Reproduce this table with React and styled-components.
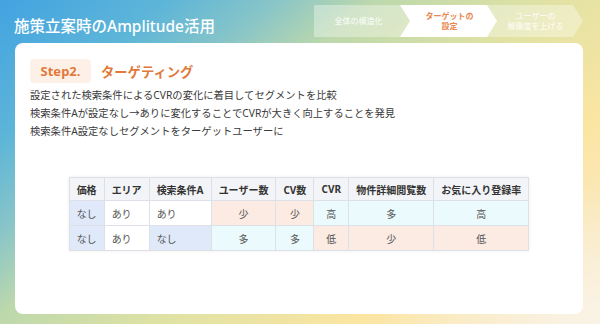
import styled, { createGlobalStyle } from "styled-components"

const GlobalStyle = createGlobalStyle`
  html, body {
    margin: 0;
    padding: 0;
  }
  body {
    font-family: "Noto Sans", "Noto Sans CJK JP", sans-serif;
  }
  * {
    box-sizing: border-box;
  }
`

const Page = styled.div`
  width: 600px;
  height: 324px;
  display: flex;
  flex-direction: column;
  padding: 0 17px 10px 15px;
  background:
    radial-gradient(ellipse 220px 140px at 100% 100%, rgba(250, 244, 232, 0.85) 0%, rgba(250, 244, 232, 0) 100%),
    linear-gradient(140deg, #43a3e1 0%, #5db5d8 17%, #88c5c8 28%, #bcd8ac 38%, #dfe2a4 55%, #fbe5a2 75%, #f9ecd8 100%);
  overflow: hidden;
`

const Header = styled.header`
  height: 43px;
  display: flex;
  align-items: flex-start;
  justify-content: space-between;
`

const Title = styled.h1`
  margin: 14px 0 0 -1px;
  font-size: 15.5px;
  font-weight: 500;
  color: #ffffff;
`

const Steps = styled.ol`
  list-style: none;
  display: flex;
  margin: 5px 0 0 0;
  padding: 0;
`

const Step = styled.li`
  width: 97px;
  height: 32px;
  margin-left: ${(p) => (p.$first ? "0" : "-11px")};
  display: flex;
  align-items: center;
  justify-content: center;
  padding-left: ${(p) => (p.$first ? "0" : "10px")};
  padding-right: 8px;
  text-align: center;
  font-size: 8px;
  line-height: 10px;
  font-weight: ${(p) => (p.$active ? 700 : 500)};
  color: ${(p) => (p.$active ? "#e8874e" : "rgba(255, 255, 255, 0.8)")};
  background: ${(p) => (p.$active ? "#ffffff" : "rgba(255, 255, 255, 0.35)")};
  clip-path: ${(p) =>
    p.$first
      ? "polygon(0 0, 87px 0, 97px 50%, 87px 100%, 0 100%)"
      : "polygon(0 0, 87px 0, 97px 50%, 87px 100%, 0 100%, 10px 50%)"};
`

const Card = styled.main`
  flex: 1;
  background: #ffffff;
  border-radius: 8px;
  padding: 16px 15px;
  display: flex;
  flex-direction: column;
`

const Heading = styled.div`
  display: flex;
  align-items: center;
  gap: 10px;
`

const StepBadge = styled.span`
  width: 61px;
  height: 24px;
  display: flex;
  align-items: center;
  justify-content: center;
  background: #fdf0e7;
  border-radius: 4px;
  color: #e2793a;
  font-size: 13px;
  font-weight: 700;
`

const HeadingText = styled.h2`
  margin: 0;
  color: #e2793a;
  font-size: 13.3px;
  font-weight: 700;
`

const Body = styled.div`
  margin-top: 3px;
  font-size: 10.3px;
  line-height: 18px;
  color: #3a3a3a;
`

const TableWrap = styled.div`
  margin-top: 37px;
  display: flex;
  justify-content: center;
`

const Table = styled.table`
  border-collapse: collapse;
  table-layout: fixed;
  box-shadow: 0 0 3px rgba(0, 0, 0, 0.08);
  font-size: 10px;
`

const Th = styled.th`
  height: 23px;
  padding: 0 7px;
  border: 1.5px solid #dde0e6;
  background: #f3f4f7;
  color: #333;
  font-weight: 700;
  text-align: ${(p) => (p.$left ? "left" : "center")};
  white-space: nowrap;
`

const tones = {
  blue: "#dfe9f9",
  pink: "#fcebe3",
  cyan: "#ebfafd",
  white: "#ffffff",
}

const Td = styled.td`
  height: 25px;
  padding: 0 7px;
  border: 1.5px solid #dde0e6;
  background: ${(p) => tones[p.$tone]};
  color: #555;
  text-align: ${(p) => (p.$left ? "left" : "center")};
  white-space: nowrap;
`

const columns = [
  { label: "価格", width: 34, left: true },
  { label: "エリア", width: 44, left: true },
  { label: "検索条件A", width: 62, left: true },
  { label: "ユーザー数", width: 63 },
  { label: "CV数", width: 37 },
  { label: "CVR", width: 35 },
  { label: "物件詳細閲覧数", width: 84 },
  { label: "お気に入り登録率", width: 95 },
]

const rows = [
  [
    ["なし", "blue"],
    ["あり", "white"],
    ["あり", "white"],
    ["少", "pink"],
    ["少", "pink"],
    ["高", "cyan"],
    ["多", "cyan"],
    ["高", "cyan"],
  ],
  [
    ["なし", "blue"],
    ["あり", "white"],
    ["なし", "blue"],
    ["多", "cyan"],
    ["多", "cyan"],
    ["低", "pink"],
    ["少", "pink"],
    ["低", "pink"],
  ],
]

export default function App() {
  return (
    <>
      <GlobalStyle />
      <Page>
        <Header>
          <Title>施策立案時のAmplitude活用</Title>
          <Steps>
            <Step $first>全体の構造化</Step>
            <Step $active>
              ターゲットの
              <br />
              設定
            </Step>
            <Step>
              ユーザーの
              <br />
              解像度を上げる
            </Step>
          </Steps>
        </Header>

        <Card>
          <Heading>
            <StepBadge>Step2.</StepBadge>
            <HeadingText>ターゲティング</HeadingText>
          </Heading>
          <Body>
            設定された検索条件によるCVRの変化に着目してセグメントを比較
            <br />
            検索条件Aが設定なし→ありに変化することでCVRが大きく向上することを発見
            <br />
            検索条件A設定なしセグメントをターゲットユーザーに
          </Body>

          <TableWrap>
            <Table>
              <colgroup>
                {columns.map((c) => (
                  <col key={c.label} style={{ width: c.width }} />
                ))}
              </colgroup>
              <thead>
                <tr>
                  {columns.map((c) => (
                    <Th key={c.label} $left={c.left}>
                      {c.label}
                    </Th>
                  ))}
                </tr>
              </thead>
              <tbody>
                {rows.map((row, i) => (
                  <tr key={i}>
                    {row.map(([text, tone], j) => (
                      <Td key={j} $tone={tone} $left={columns[j].left}>
                        {text}
                      </Td>
                    ))}
                  </tr>
                ))}
              </tbody>
            </Table>
          </TableWrap>
        </Card>
      </Page>
    </>
  )
}
